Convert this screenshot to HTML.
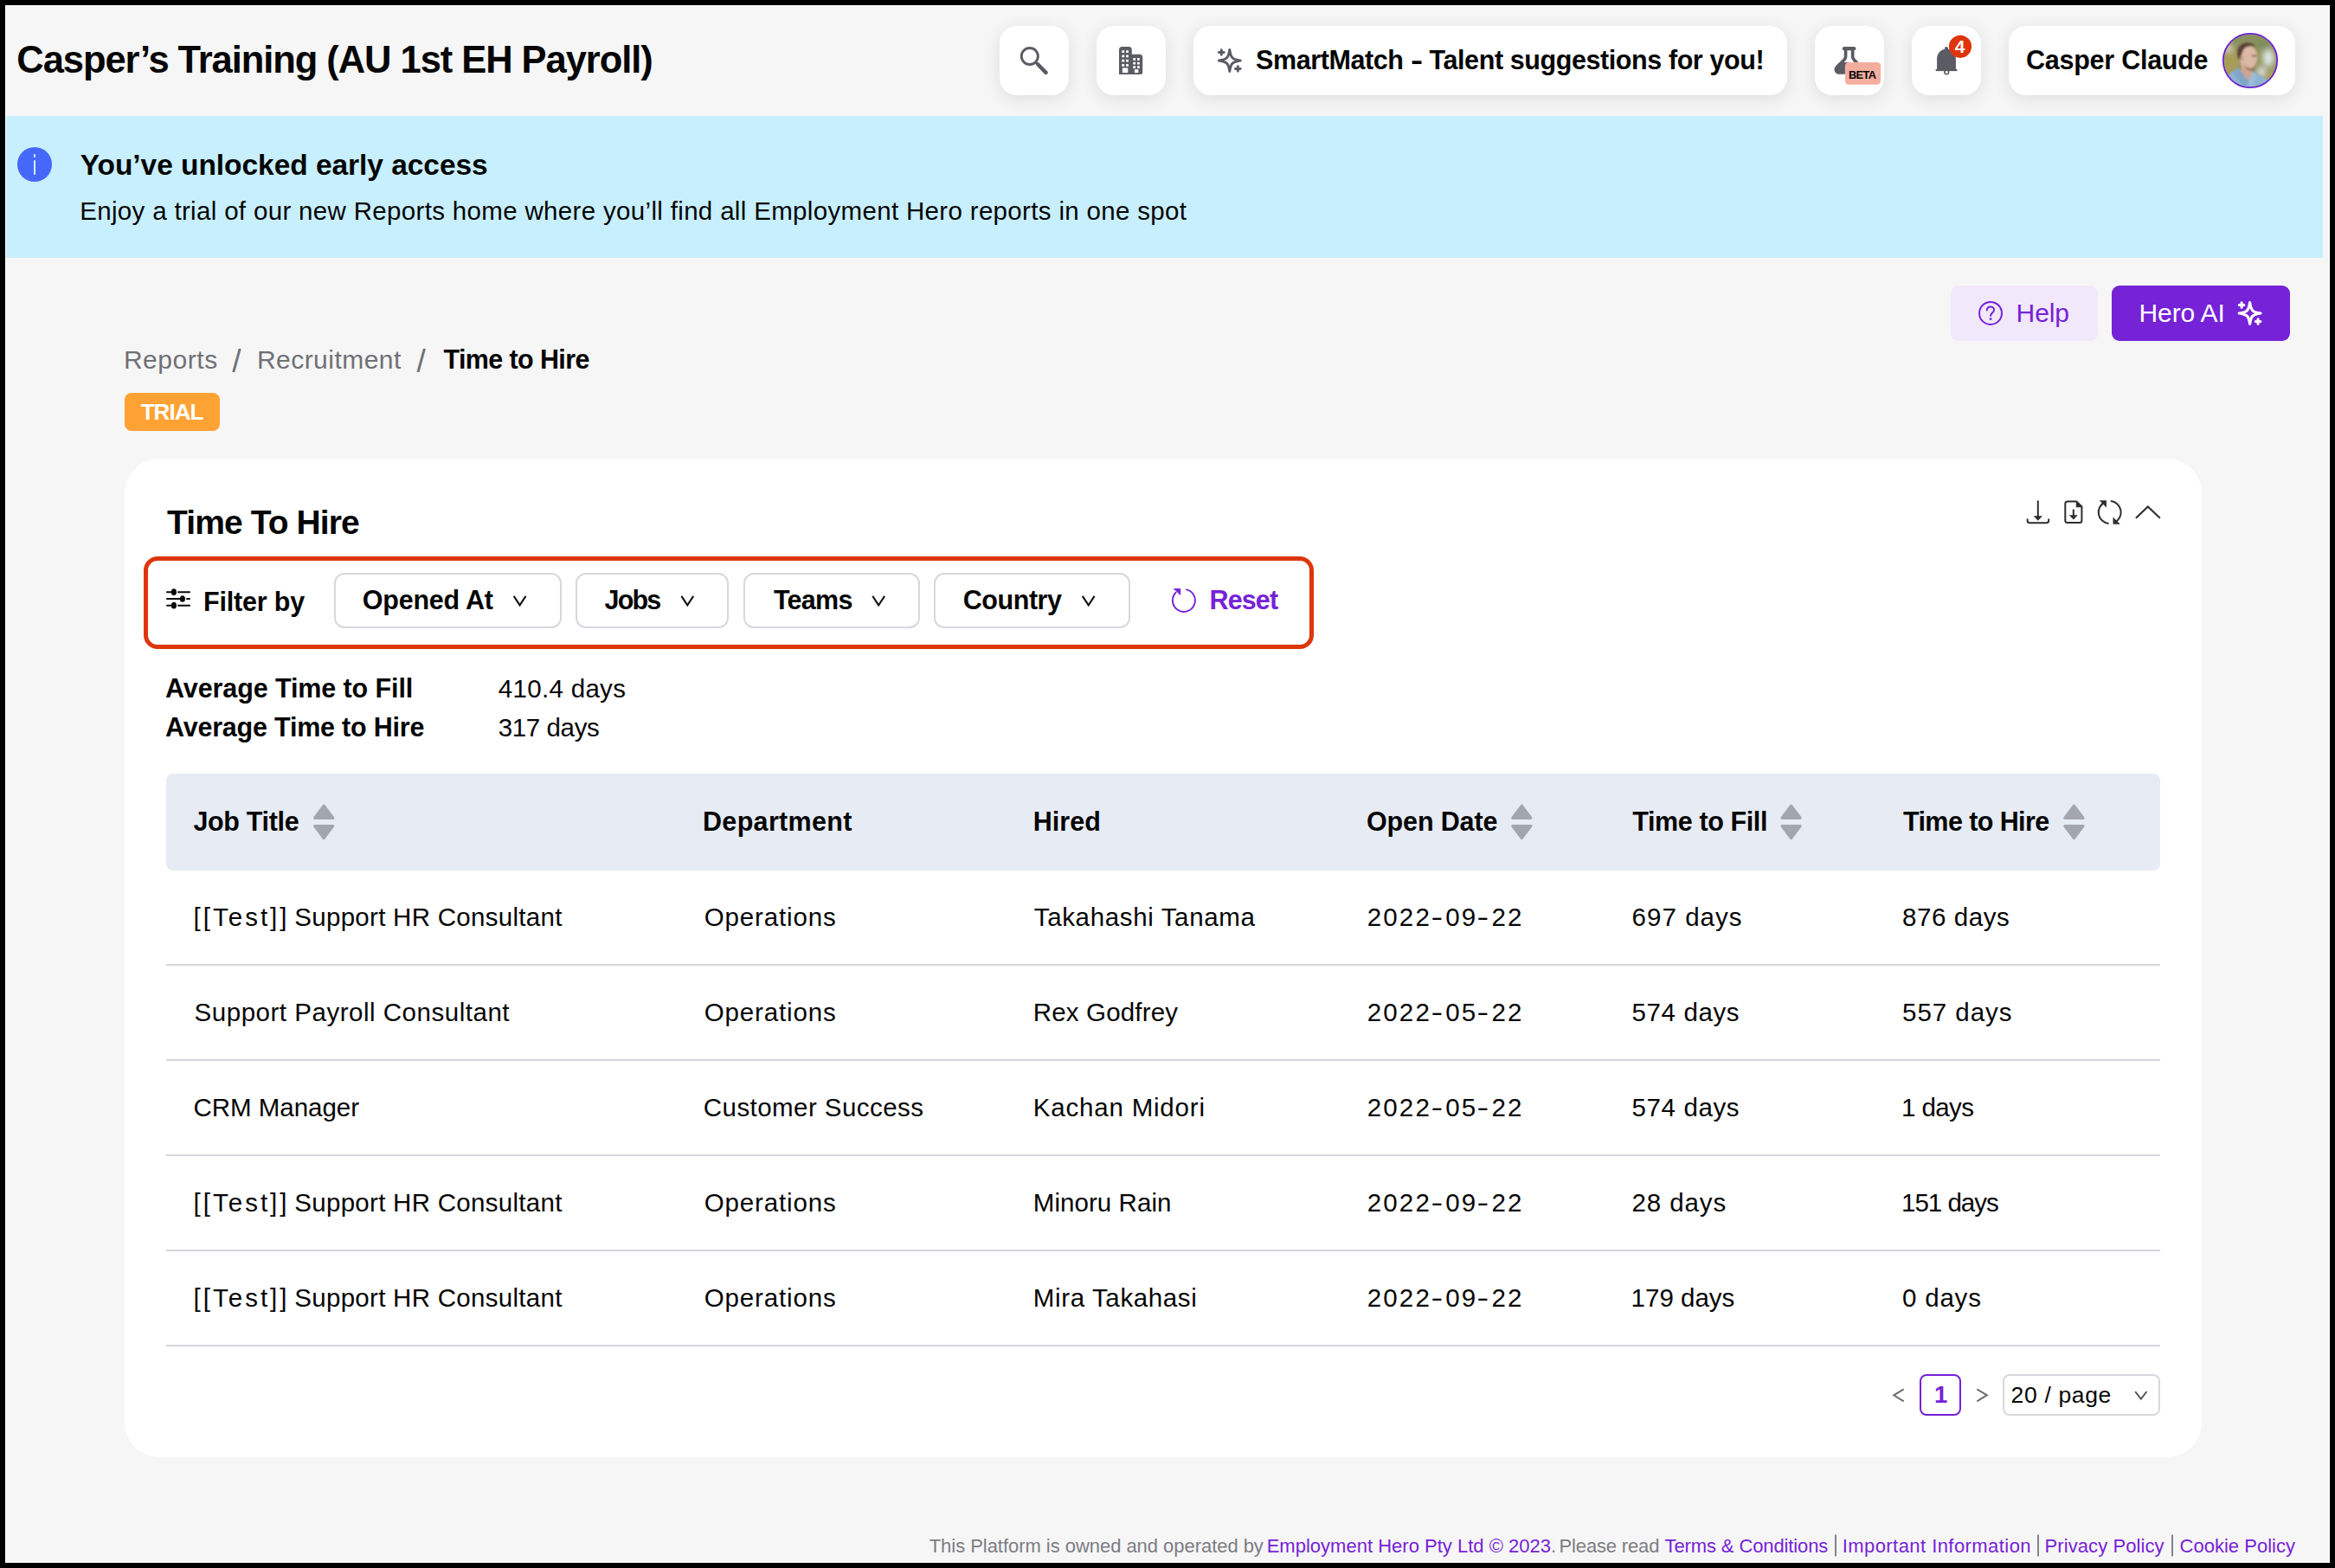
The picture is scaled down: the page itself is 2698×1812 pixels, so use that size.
<!DOCTYPE html>
<html lang="en">
<head>
<meta charset="utf-8">
<title>Time to Hire - Reports</title>
<style>
html,body{margin:0;padding:0;background:#f6f6f6}
body{width:2698px;height:1812px;overflow:hidden;position:relative;font-family:"Liberation Sans",sans-serif}
.t{position:absolute;white-space:nowrap;font-family:"Liberation Sans",sans-serif}
.hy{display:inline-block;transform:scaleX(1.4);margin:0 2.1px}
.a{position:absolute;box-sizing:border-box}
.hb{background:#fff;border-radius:20px;box-shadow:0 4px 20px rgba(0,0,0,.1);top:30px;height:80px}
.dd{border:2px solid #d7d8de;border-radius:12px;top:662px;height:64px;background:#fff}
.sep{left:192px;width:2304px;height:2px;background:#d6d7dd}
svg{position:absolute;overflow:visible}
</style>
</head>
<body>
<!-- header buttons -->
<div class="a hb" style="left:1155px;width:80px"></div>
<div class="a hb" style="left:1267px;width:80px"></div>
<div class="a hb" style="left:1379px;width:686px"></div>
<div class="a hb" style="left:2097px;width:80px"></div>
<div class="a hb" style="left:2209px;width:80px"></div>
<div class="a hb" style="left:2321px;width:331px"></div>
<!--ICONS-HEADER-->
<!-- banner -->
<div class="a" style="left:6px;top:134px;width:2678px;height:164px;background:#c8effd"></div>
<div class="a" style="left:20px;top:170px;width:40px;height:40px;border-radius:50%;background:#4568fb"></div>
<div class="a" style="left:38.7px;top:184.5px;width:2.6px;height:17.4px;border-radius:1.3px;background:#d6f5fe"></div>
<div class="a" style="left:38.6px;top:177.9px;width:2.8px;height:4.2px;border-radius:1.4px;background:#d6f5fe"></div>
<!-- help / hero ai -->
<div class="a" style="left:2254px;top:330px;width:170px;height:64px;border-radius:9px;background:#f1e8fb"></div>
<div class="a" style="left:2440px;top:330px;width:206px;height:64px;border-radius:9px;background:#7622d7"></div>
<!-- trial -->
<div class="a" style="left:144px;top:454px;width:110px;height:44px;border-radius:8px;background:#ffa234"></div>
<!-- card -->
<div class="a" style="left:144px;top:530px;width:2400px;height:1154px;border-radius:40px;background:#fff"></div>
<!-- red highlight -->
<div class="a" style="left:166px;top:643px;width:1352px;height:107px;border:5px solid #de350b;border-radius:16px"></div>
<!-- dropdowns -->
<div class="a dd" style="left:385.5px;width:263.3px"></div>
<div class="a dd" style="left:665.1px;width:177.4px"></div>
<div class="a dd" style="left:859.1px;width:203.7px"></div>
<div class="a dd" style="left:1079px;width:226.6px"></div>
<!-- table -->
<div class="a" style="left:192px;top:894px;width:2304px;height:112px;border-radius:8px;background:#e7ebf4"></div>
<div class="a sep" style="top:1114px"></div>
<div class="a sep" style="top:1224px"></div>
<div class="a sep" style="top:1334px"></div>
<div class="a sep" style="top:1444px"></div>
<div class="a sep" style="top:1554px"></div>
<!-- pagination -->
<div class="a" style="left:2218px;top:1588px;width:48px;height:48px;border:2px solid #7622d7;border-radius:8px;background:#fff"></div>
<div class="a" style="left:2314.2px;top:1588px;width:181.8px;height:48px;border:2px solid #d7d7dd;border-radius:8px;background:#fff"></div>
<svg class="a" style="left:0;top:0" width="2698" height="1812" viewBox="0 0 2698 1812"><circle cx="1189.8" cy="65" r="9.55" fill="none" stroke="#5b5c63" stroke-width="2.9"/>
<path d="M1196.4,71.6L1200,75.2" stroke="#5b5c63" stroke-width="2.9"/><path d="M1199.3,74.5L1208.5,83.8" stroke="#5b5c63" stroke-width="4.6" stroke-linecap="round"/>
<path d="M1293,85.9V57.4a3.5,3.5 0 0 1 3.5,-3.5h7.8a3.5,3.5 0 0 1 3.5,3.5V62.7h8.9a3.5,3.5 0 0 1 3.5,3.5V83.4a2.5,2.5 0 0 1 -2.5,2.5Z" fill="#5b5c63"/>
<g fill="#fff"><rect x="1296.3" y="58.3" width="2.9" height="2.8" rx=".5"/><rect x="1296.3" y="63.5" width="2.9" height="2.8" rx=".5"/><rect x="1296.3" y="68.7" width="2.9" height="2.8" rx=".5"/><rect x="1296.3" y="73.9" width="2.9" height="2.8" rx=".5"/><rect x="1301.1" y="58.3" width="2.9" height="2.8" rx=".5"/><rect x="1301.1" y="63.5" width="2.9" height="2.8" rx=".5"/><rect x="1301.1" y="68.7" width="2.9" height="2.8" rx=".5"/><rect x="1301.1" y="73.9" width="2.9" height="2.8" rx=".5"/><rect x="1296.9" y="78.5" width="6.4" height="5.6"/><rect x="1309.3" y="67" width="2.8" height="2.7" rx=".5"/><rect x="1309.3" y="71.8" width="2.8" height="2.7" rx=".5"/><rect x="1309.3" y="76.2" width="2.8" height="2.7" rx=".5"/><rect x="1314.0" y="67" width="2.8" height="2.7" rx=".5"/><rect x="1314.0" y="71.8" width="2.8" height="2.7" rx=".5"/><rect x="1314.0" y="76.2" width="2.8" height="2.7" rx=".5"/><rect x="1310.9" y="80.2" width="4.5" height="3.9"/></g>
<g transform="translate(1420.8,70.0)" fill="none" stroke="#5b5c63" stroke-linejoin="round" stroke-linecap="round"><path d="M0,-12.4 C1.3,-3.2 3.2,-1.3 12.4,0 C3.2,1.3 1.3,3.2 0,12.4 C-1.3,3.2 -3.2,1.3 -12.4,0 C-3.2,-1.3 -1.3,-3.2 0,-12.4Z" stroke-width="3.0"/><path d="M-12.350000000000001,-9.5H-6.65M-9.5,-12.350000000000001V-6.65" stroke-width="2.9"/><path d="M6.65,9.5H12.350000000000001M9.5,6.65V12.350000000000001" stroke-width="2.9"/></g>
<path d="M2130.9,56.2H2142.3" stroke="#5b5c63" stroke-width="4.2" stroke-linecap="round"/>
<path d="M2132.55,57V65.6c0,1.6 -0.6,2.6 -1.8,3.7L2122.6,77.4c-2.6,2.8 -0.9,6.6 3,6.6H2147.2c3.9,0 5.6,-3.8 3,-6.6L2142.45,69.3c-1.2,-1.1 -1.8,-2.1 -1.8,-3.7V57" fill="none" stroke="#5b5c63" stroke-width="3.7" stroke-linejoin="round"/>
<path d="M2129.6,72.7H2143.6L2150.6,79.5c1.8,2.2 0.6,4.6 -2.6,4.6H2125.2c-3.2,0 -4.4,-2.4 -2.6,-4.6Z" fill="#5b5c63" stroke="#5b5c63" stroke-width="1.6" stroke-linejoin="round"/>
<rect x="2131.9" y="72.1" width="41.1" height="25.7" rx="4.2" fill="#f3ae9f"/>
<path d="M2249,53.9a2,2 0 0 1 2,2v.8c5.3,1.1 8.9,5.6 8.9,11.3V80h1.3v2.1H2236.8V80h1.3V68c0,-5.700 3.600,-10.200 8.900,-11.300v-.8a2,2 0 0 1 2,-2Z" fill="#5b5c63"/>
<circle cx="2249.2" cy="83.3" r="2.4" fill="#fff" stroke="#5b5c63" stroke-width="1.6"/>
<rect x="2236.8" y="80" width="24.5" height="2.1" fill="#5b5c63"/>
<circle cx="2265" cy="53.8" r="13.1" fill="#de350b"/>
<defs><clipPath id="avc"><circle cx="2600" cy="70" r="30.3"/></clipPath><filter id="avb" x="-20%" y="-20%" width="140%" height="140%"><feGaussianBlur stdDeviation="1.2"/></filter><filter id="avb2" x="-30%" y="-30%" width="160%" height="160%"><feGaussianBlur stdDeviation="3"/></filter></defs>
<circle cx="2600" cy="70" r="31" fill="#8f9060" stroke="#6d1fd8" stroke-width="2.2"/>
<g clip-path="url(#avc)"><g transform="translate(2568,38)">
<rect x="0" y="0" width="64" height="64" fill="#949663"/>
<g filter="url(#avb2)"><ellipse cx="8" cy="34" rx="12" ry="16" fill="#a89c58"/><ellipse cx="30" cy="8" rx="22" ry="10" fill="#88915f"/><ellipse cx="53" cy="29" rx="6.5" ry="10" fill="#dfe6e6"/><ellipse cx="45" cy="45" rx="5" ry="6" fill="#d9e3e8"/><ellipse cx="47" cy="14" rx="8" ry="6" fill="#7f8c5c"/><ellipse cx="55" cy="50" rx="8" ry="6" fill="#b3a35c"/><ellipse cx="7" cy="18" rx="4" ry="5" fill="#d9d3c0"/></g>
<g filter="url(#avb)"><path d="M22,36L34,40V54H20Z" fill="#cfa590"/><ellipse cx="29.8" cy="28" rx="10.3" ry="13.5" fill="#dcb9a6"/><path d="M17.5,27C15.500,17 21,11.500 29,11.500C34,11.500 37,13 38,16C33,14.500 27,15.500 24.500,19C23,22 22,25 20.500,31C19,31 18,29 17.500,27Z" fill="#5b4335"/><path d="M24,34C27,41 33,42.500 38,39L36,43.500C31,45 26,42 24,34Z" fill="#9a7560"/><ellipse cx="36.500" cy="26.500" rx="3" ry="1.300" fill="#8f6f5e"/><ellipse cx="22.500" cy="29" rx="2" ry="3.500" fill="#c89f8a"/>
<path d="M5,50L17.500,40L30,56L35,44.500L52,54L58,64H5Z" fill="#8db2d4"/><path d="M17.500,40L30,56L26,64L12,46Z" fill="#7fa5c9"/><path d="M35,44.500L30,56L33,64L40,50Z" fill="#9cbddb"/></g>
</g></g>
<circle cx="2300" cy="361.900" r="13" fill="none" stroke="#7622d7" stroke-width="2"/>
<path d="M2295.900,358.400c0,-2.500 1.800,-4 4.100,-4s4.100,1.500 4.100,3.700c0,3.300 -4,3.500 -4,6.900" fill="none" stroke="#7622d7" stroke-width="2" stroke-linecap="round"/><circle cx="2300.050" cy="368.700" r="1.400" fill="#7622d7"/>
<g transform="translate(2599.6,362.0)" fill="none" stroke="#fff" stroke-linejoin="round" stroke-linecap="round"><path d="M0,-12.4 C1.3,-3.2 3.2,-1.3 12.4,0 C3.2,1.3 1.3,3.2 0,12.4 C-1.3,3.2 -3.2,1.3 -12.4,0 C-3.2,-1.3 -1.3,-3.2 0,-12.4Z" stroke-width="3.2"/><path d="M-12.25,-9.5H-6.75M-9.5,-12.25V-6.75" stroke-width="3.1"/><path d="M6.75,9.5H12.25M9.5,6.75V12.25" stroke-width="3.1"/></g>
<g fill="none" stroke="#2e2e31" stroke-width="2" stroke-linecap="round" stroke-linejoin="round"><path d="M2354.800,579.200V598"/><path d="M2342.600,600.300V601.600a2.600,2.600 0 0 0 2.600,2.600H2364.600a2.600,2.600 0 0 0 2.600,-2.600V600.300"/><path d="M2390.800,579.600H2399.500L2405.400,585.500V601.600a2.500,2.500 0 0 1 -2.500,2.500H2388.800a2.500,2.500 0 0 1 -2.500,-2.500V582.100a2.500,2.500 0 0 1 2.500,-2.500Z"/><path d="M2395.800,589.400V596"/><path d="M2467.900,598.800L2481.800,585.400L2495.800,598.800" stroke-linecap="butt" stroke-linejoin="miter" stroke-width="2.100"/></g>
<path d="M2349.700,596.200H2359.900L2354.800,601.700Z" fill="#2e2e31"/><path d="M2390.800,595.200H2400.800L2395.800,600.500Z" fill="#2e2e31"/><path d="M2398.800,578.800L2406.200,586.200H2398.800Z" fill="#2e2e31"/>
<g fill="none" stroke="#2e2e31" stroke-width="2"><path d="M2432.21,580.22A13.0,13.0 0 0 0 2436.57,604.95"/><path d="M2443.19,603.78A13.0,13.0 0 0 0 2438.83,579.05"/></g>
<path d="M2425.600,578.300H2433.900V586.600Z" fill="#2e2e31"/><path d="M2449.800,605.700H2441.500V597.400Z" fill="#2e2e31"/>
<g stroke="#0a0a0a" stroke-width="2" stroke-linecap="round"><path d="M193,684.200H198M206,684.200H219M193,692H208M216,692H219M193,699.700H198M206,699.700H219"/></g><g fill="#0a0a0a"><ellipse cx="200.900" cy="684.200" rx="3.050" ry="3.850"/><ellipse cx="210.900" cy="692" rx="3.050" ry="3.850"/><ellipse cx="200.900" cy="699.700" rx="3.050" ry="3.850"/></g>
<path d="M593.7,688.9L600.6,699.3L607.5,688.9" fill="none" stroke="#111" stroke-width="2.1" stroke-linejoin="miter"/>
<path d="M787.4,688.9L794.3,699.3L801.2,688.9" fill="none" stroke="#111" stroke-width="2.1" stroke-linejoin="miter"/>
<path d="M1008.3,688.9L1015.2,699.3L1022.1,688.9" fill="none" stroke="#111" stroke-width="2.1" stroke-linejoin="miter"/>
<path d="M1250.8,688.9L1257.6999999999998,699.3L1264.6,688.9" fill="none" stroke="#111" stroke-width="2.1" stroke-linejoin="miter"/>
<path d="M1370.16,681.10A13.0,13.0 0 1 1 1359.20,684.24" fill="none" stroke="#7622d7" stroke-width="1.900"/>
<path d="M1356.100,680.300H1363.900V687.600Z" fill="#7622d7" stroke="#7622d7" stroke-width=".6" stroke-linejoin="round"/>
<g fill="#a3a6af" stroke="#a3a6af" stroke-width="3.2" stroke-linejoin="round"><path d="M374.2,931.1999999999999L384.75,945.3H363.65Z"/><path d="M374.2,968.6L384.75,954.5H363.65Z"/></g>
<g fill="#a3a6af" stroke="#a3a6af" stroke-width="3.2" stroke-linejoin="round"><path d="M1758.3,931.1999999999999L1768.85,945.3H1747.75Z"/><path d="M1758.3,968.6L1768.85,954.5H1747.75Z"/></g>
<g fill="#a3a6af" stroke="#a3a6af" stroke-width="3.2" stroke-linejoin="round"><path d="M2069.6,931.1999999999999L2080.15,945.3H2059.0499999999997Z"/><path d="M2069.6,968.6L2080.15,954.5H2059.0499999999997Z"/></g>
<g fill="#a3a6af" stroke="#a3a6af" stroke-width="3.2" stroke-linejoin="round"><path d="M2396.4,931.1999999999999L2406.9500000000003,945.3H2385.85Z"/><path d="M2396.4,968.6L2406.9500000000003,954.5H2385.85Z"/></g>
<path d="M2199.700,1605.300L2188.200,1612.300L2199.700,1619.300" fill="none" stroke="#6c6d74" stroke-width="2"/>
<path d="M2284.300,1605.300L2295.800,1612.300L2284.300,1619.300" fill="none" stroke="#6c6d74" stroke-width="2"/>
<path d="M2467.2,1608.2L2473.8,1616.6L2480.4,1608.2" fill="none" stroke="#55565c" stroke-width="1.9" stroke-linejoin="miter"/>
<rect x="2120.1" y="1773.500" width="1.800" height="25" fill="#77787e"/>
<rect x="2354.1" y="1773.500" width="1.800" height="25" fill="#77787e"/>
<rect x="2509.1" y="1773.500" width="1.800" height="25" fill="#77787e"/></svg>
<span class="t" style="left:19.3px;top:48.0px;font-size:43.5px;line-height:43.5px;font-weight:700;letter-spacing:-1.06px;color:#050505">Casper’s Training (AU 1st EH Payroll)</span>
<span class="t" style="left:1451.0px;top:54.0px;font-size:30.5px;line-height:30.5px;font-weight:700;letter-spacing:-0.41px;color:#050505">SmartMatch <span class="hy">-</span> Talent suggestions for you!</span>
<span class="t" style="left:2341.0px;top:54.0px;font-size:30.5px;line-height:30.5px;font-weight:700;letter-spacing:-0.25px;color:#050505">Casper Claude</span>
<span class="t" style="left:2136.0px;top:81.0px;font-size:12.8px;line-height:12.8px;font-weight:700;letter-spacing:-0.67px;color:#050505">BETA</span>
<span class="t" style="left:2258.8px;top:43.0px;font-size:21px;line-height:21px;font-weight:700;letter-spacing:0.00px;color:#fff">4</span>
<span class="t" style="left:92.7px;top:174.0px;font-size:33.5px;line-height:33.5px;font-weight:700;letter-spacing:-0.05px;color:#050505">You’ve unlocked early access</span>
<span class="t" style="left:92.2px;top:229.0px;font-size:29.5px;line-height:29.5px;font-weight:400;letter-spacing:0.33px;color:#050505">Enjoy a trial of our new Reports home where you’ll find all Employment Hero reports in one spot</span>
<span class="t" style="left:2329.6px;top:347.0px;font-size:30px;line-height:30px;font-weight:400;letter-spacing:-0.13px;color:#7622d7">Help</span>
<span class="t" style="left:2471.6px;top:347.0px;font-size:30px;line-height:30px;font-weight:400;letter-spacing:-0.15px;color:#fff">Hero AI</span>
<span class="t" style="left:142.9px;top:401.0px;font-size:30px;line-height:30px;font-weight:400;letter-spacing:0.55px;color:#6f7076">Reports</span>
<span class="t" style="left:268.3px;top:399.0px;font-size:37px;line-height:37px;font-weight:400;letter-spacing:0.00px;color:#6f7076">/</span>
<span class="t" style="left:296.9px;top:401.0px;font-size:30px;line-height:30px;font-weight:400;letter-spacing:0.47px;color:#6f7076">Recruitment</span>
<span class="t" style="left:481.5px;top:399.0px;font-size:37px;line-height:37px;font-weight:400;letter-spacing:0.00px;color:#6f7076">/</span>
<span class="t" style="left:512.5px;top:400.0px;font-size:30.5px;line-height:30.5px;font-weight:700;letter-spacing:-0.62px;color:#050505">Time to Hire</span>
<span class="t" style="left:162.7px;top:463.0px;font-size:26px;line-height:26px;font-weight:700;letter-spacing:-0.95px;color:#fff">TRIAL</span>
<span class="t" style="left:193.0px;top:584.0px;font-size:39px;line-height:39px;font-weight:700;letter-spacing:-0.90px;color:#050505">Time To Hire</span>
<span class="t" style="left:235.1px;top:680.0px;font-size:30.5px;line-height:30.5px;font-weight:700;letter-spacing:-0.20px;color:#050505">Filter by</span>
<span class="t" style="left:418.8px;top:678.0px;font-size:30.5px;line-height:30.5px;font-weight:700;letter-spacing:-0.24px;color:#050505">Opened At</span>
<span class="t" style="left:698.6px;top:678.0px;font-size:30.5px;line-height:30.5px;font-weight:700;letter-spacing:-1.87px;color:#050505">Jobs</span>
<span class="t" style="left:893.9px;top:678.0px;font-size:30.5px;line-height:30.5px;font-weight:700;letter-spacing:-0.70px;color:#050505">Teams</span>
<span class="t" style="left:1112.8px;top:678.0px;font-size:30.5px;line-height:30.5px;font-weight:700;letter-spacing:-0.45px;color:#050505">Country</span>
<span class="t" style="left:1397.5px;top:678.0px;font-size:30.5px;line-height:30.5px;font-weight:700;letter-spacing:-0.88px;color:#7622d7">Reset</span>
<span class="t" style="left:191.0px;top:780.0px;font-size:30.5px;line-height:30.5px;font-weight:700;letter-spacing:-0.10px;color:#050505">Average Time to Fill</span>
<span class="t" style="left:191.0px;top:825.0px;font-size:30.5px;line-height:30.5px;font-weight:700;letter-spacing:-0.21px;color:#050505">Average Time to Hire</span>
<span class="t" style="left:575.8px;top:781.0px;font-size:29.5px;line-height:29.5px;font-weight:400;letter-spacing:0.31px;color:#050505">410.4 days</span>
<span class="t" style="left:575.8px;top:826.0px;font-size:29.5px;line-height:29.5px;font-weight:400;letter-spacing:-0.40px;color:#050505">317 days</span>
<span class="t" style="left:223.4px;top:934.0px;font-size:30.5px;line-height:30.5px;font-weight:700;letter-spacing:-0.33px;color:#050505">Job Title</span>
<span class="t" style="left:812.0px;top:934.0px;font-size:30.5px;line-height:30.5px;font-weight:700;letter-spacing:0.33px;color:#050505">Department</span>
<span class="t" style="left:1193.7px;top:934.0px;font-size:30.5px;line-height:30.5px;font-weight:700;letter-spacing:0.07px;color:#050505">Hired</span>
<span class="t" style="left:1579.0px;top:934.0px;font-size:30.5px;line-height:30.5px;font-weight:700;letter-spacing:-0.14px;color:#050505">Open Date</span>
<span class="t" style="left:1886.3px;top:934.0px;font-size:30.5px;line-height:30.5px;font-weight:700;letter-spacing:-0.39px;color:#050505">Time to Fill</span>
<span class="t" style="left:2199.0px;top:934.0px;font-size:30.5px;line-height:30.5px;font-weight:700;letter-spacing:-0.59px;color:#050505">Time to Hire</span>
<span class="t" style="left:223.6px;top:1045.0px;font-size:29.5px;line-height:29.5px;font-weight:400;letter-spacing:0.29px;color:#050505"><span style="letter-spacing:3px">[[Test]</span>] Support HR Consultant</span>
<span class="t" style="left:813.8px;top:1045.0px;font-size:29.5px;line-height:29.5px;font-weight:400;letter-spacing:0.84px;color:#050505">Operations</span>
<span class="t" style="left:1194.8px;top:1045.0px;font-size:29.5px;line-height:29.5px;font-weight:400;letter-spacing:0.64px;color:#050505">Takahashi Tanama</span>
<span class="t" style="left:1579.7px;top:1045.0px;font-size:29.5px;line-height:29.5px;font-weight:400;letter-spacing:2.17px;color:#050505">2022<span class="hy">-</span>09<span class="hy">-</span>22</span>
<span class="t" style="left:1885.6px;top:1045.0px;font-size:29.5px;line-height:29.5px;font-weight:400;letter-spacing:1.03px;color:#050505">697 days</span>
<span class="t" style="left:2198.0px;top:1045.0px;font-size:29.5px;line-height:29.5px;font-weight:400;letter-spacing:0.57px;color:#050505">876 days</span>
<span class="t" style="left:224.6px;top:1155.0px;font-size:29.5px;line-height:29.5px;font-weight:400;letter-spacing:0.52px;color:#050505">Support Payroll Consultant</span>
<span class="t" style="left:813.8px;top:1155.0px;font-size:29.5px;line-height:29.5px;font-weight:400;letter-spacing:0.84px;color:#050505">Operations</span>
<span class="t" style="left:1193.8px;top:1155.0px;font-size:29.5px;line-height:29.5px;font-weight:400;letter-spacing:0.16px;color:#050505">Rex Godfrey</span>
<span class="t" style="left:1579.7px;top:1155.0px;font-size:29.5px;line-height:29.5px;font-weight:400;letter-spacing:2.17px;color:#050505">2022<span class="hy">-</span>05<span class="hy">-</span>22</span>
<span class="t" style="left:1885.6px;top:1155.0px;font-size:29.5px;line-height:29.5px;font-weight:400;letter-spacing:0.60px;color:#050505">574 days</span>
<span class="t" style="left:2198.0px;top:1155.0px;font-size:29.5px;line-height:29.5px;font-weight:400;letter-spacing:0.97px;color:#050505">557 days</span>
<span class="t" style="left:223.6px;top:1265.0px;font-size:29.5px;line-height:29.5px;font-weight:400;letter-spacing:-0.04px;color:#050505">CRM Manager</span>
<span class="t" style="left:812.8px;top:1265.0px;font-size:29.5px;line-height:29.5px;font-weight:400;letter-spacing:0.44px;color:#050505">Customer Success</span>
<span class="t" style="left:1193.8px;top:1265.0px;font-size:29.5px;line-height:29.5px;font-weight:400;letter-spacing:0.80px;color:#050505">Kachan Midori</span>
<span class="t" style="left:1579.7px;top:1265.0px;font-size:29.5px;line-height:29.5px;font-weight:400;letter-spacing:2.17px;color:#050505">2022<span class="hy">-</span>05<span class="hy">-</span>22</span>
<span class="t" style="left:1885.6px;top:1265.0px;font-size:29.5px;line-height:29.5px;font-weight:400;letter-spacing:0.60px;color:#050505">574 days</span>
<span class="t" style="left:2197.0px;top:1265.0px;font-size:29.5px;line-height:29.5px;font-weight:400;letter-spacing:-0.60px;color:#050505">1 days</span>
<span class="t" style="left:223.6px;top:1375.0px;font-size:29.5px;line-height:29.5px;font-weight:400;letter-spacing:0.29px;color:#050505"><span style="letter-spacing:3px">[[Test]</span>] Support HR Consultant</span>
<span class="t" style="left:813.8px;top:1375.0px;font-size:29.5px;line-height:29.5px;font-weight:400;letter-spacing:0.84px;color:#050505">Operations</span>
<span class="t" style="left:1193.8px;top:1375.0px;font-size:29.5px;line-height:29.5px;font-weight:400;letter-spacing:0.06px;color:#050505">Minoru Rain</span>
<span class="t" style="left:1579.7px;top:1375.0px;font-size:29.5px;line-height:29.5px;font-weight:400;letter-spacing:2.17px;color:#050505">2022<span class="hy">-</span>09<span class="hy">-</span>22</span>
<span class="t" style="left:1885.6px;top:1375.0px;font-size:29.5px;line-height:29.5px;font-weight:400;letter-spacing:0.87px;color:#050505">28 days</span>
<span class="t" style="left:2197.0px;top:1375.0px;font-size:29.5px;line-height:29.5px;font-weight:400;letter-spacing:-1.00px;color:#050505">151 days</span>
<span class="t" style="left:223.6px;top:1485.0px;font-size:29.5px;line-height:29.5px;font-weight:400;letter-spacing:0.29px;color:#050505"><span style="letter-spacing:3px">[[Test]</span>] Support HR Consultant</span>
<span class="t" style="left:813.8px;top:1485.0px;font-size:29.5px;line-height:29.5px;font-weight:400;letter-spacing:0.84px;color:#050505">Operations</span>
<span class="t" style="left:1193.8px;top:1485.0px;font-size:29.5px;line-height:29.5px;font-weight:400;letter-spacing:0.63px;color:#050505">Mira Takahasi</span>
<span class="t" style="left:1579.7px;top:1485.0px;font-size:29.5px;line-height:29.5px;font-weight:400;letter-spacing:2.17px;color:#050505">2022<span class="hy">-</span>09<span class="hy">-</span>22</span>
<span class="t" style="left:1884.6px;top:1485.0px;font-size:29.5px;line-height:29.5px;font-weight:400;letter-spacing:0.00px;color:#050505">179 days</span>
<span class="t" style="left:2198.0px;top:1485.0px;font-size:29.5px;line-height:29.5px;font-weight:400;letter-spacing:0.80px;color:#050505">0 days</span>
<span class="t" style="left:2235.0px;top:1598.0px;font-size:27.5px;line-height:27.5px;font-weight:700;letter-spacing:0.00px;color:#7622d7">1</span>
<span class="t" style="left:2323.6px;top:1599.0px;font-size:26.5px;line-height:26.5px;font-weight:400;letter-spacing:0.65px;color:#050505">20 / page</span>
<span class="t" style="left:1073.7px;top:1776.0px;font-size:22px;line-height:22px;font-weight:400;letter-spacing:-0.04px;color:#7c7d83">This Platform is owned and operated by</span>
<span class="t" style="left:1463.7px;top:1776.0px;font-size:22px;line-height:22px;font-weight:400;letter-spacing:0.01px;color:#7622d7">Employment Hero Pty Ltd © 2023</span>
<span class="t" style="left:1792.0px;top:1776.0px;font-size:22px;line-height:22px;font-weight:400;letter-spacing:0.00px;color:#7c7d83">.</span>
<span class="t" style="left:1801.6px;top:1776.0px;font-size:22px;line-height:22px;font-weight:400;letter-spacing:-0.16px;color:#7c7d83">Please read</span>
<span class="t" style="left:1923.5px;top:1776.0px;font-size:22px;line-height:22px;font-weight:400;letter-spacing:-0.11px;color:#7622d7">Terms &amp; Conditions</span>
<span class="t" style="left:2128.7px;top:1776.0px;font-size:22px;line-height:22px;font-weight:400;letter-spacing:0.44px;color:#7622d7">Important Information</span>
<span class="t" style="left:2362.6px;top:1776.0px;font-size:22px;line-height:22px;font-weight:400;letter-spacing:0.08px;color:#7622d7">Privacy Policy</span>
<span class="t" style="left:2518.5px;top:1776.0px;font-size:22px;line-height:22px;font-weight:400;letter-spacing:0.02px;color:#7622d7">Cookie Policy</span>
<!-- frame -->
<div class="a" style="left:0;top:0;width:2698px;height:1812px;border:6px solid #000;box-shadow:inset 0 0 0 1.2px rgba(255,255,255,.85);pointer-events:none"></div>
</body>
</html>
